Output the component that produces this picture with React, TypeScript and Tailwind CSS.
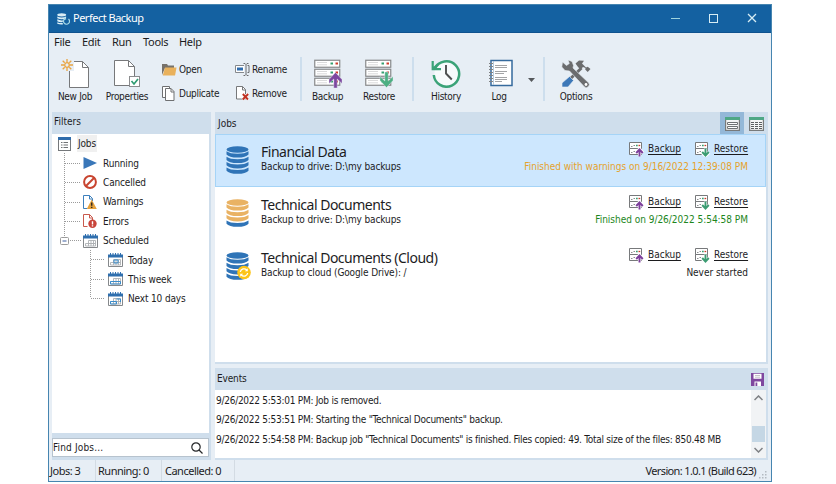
import type { ReactNode } from "react";

const SEGOE = "font-['Noto_Sans','Open_Sans',sans-serif]";
const TAHOMA = "font-['DejaVu_Sans_Condensed','DejaVu_Sans',sans-serif]";

/* ---------- icons ---------- */

function Sheet({ w = 20, h = 27 }: { w?: number; h?: number }) {
  return (
    <g fill="#fff" stroke="#77787a" strokeWidth="1">
      <path d={`M.5 .5H${w - 6.5}L${w - 0.5} 6.5V${h - 0.5}H.5Z`} />
      <path d={`M${w - 6.5} .5V6.5H${w - 0.5}`} fill="none" />
    </g>
  );
}

function NewJobIcon() {
  return (
    <svg width="28" height="29" viewBox="0 0 28 29">
      <g transform="translate(8 2)"><Sheet w={20} h={27} /></g>
      <path d="M0 0h13v12H0z" fill="#e7eef5" />
      <g stroke="#e9a440" strokeWidth="1.3" fill="none">
        <circle cx="6" cy="6" r="2.3" />
        <path d="M6 0v3M6 9v3M0 6h3M9 6h3M1.7 1.7l2 2M8.3 8.3l2 2M10.3 1.7l-2 2M3.7 8.3l-2 2" />
      </g>
    </svg>
  );
}

function PropertiesIcon() {
  return (
    <svg width="26" height="29" viewBox="0 0 26 29">
      <g transform="translate(0 1)"><Sheet w={21} h={26} /></g>
      <rect x="15.5" y="17.500" width="10" height="10" fill="#fff" stroke="#8b8c8e" />
      <path d="M17.500 22l2.500 3 4-5" stroke="#2f9c72" strokeWidth="1.700" fill="none" />
    </svg>
  );
}

function OpenIcon() {
  return (
    <svg width="15" height="13" viewBox="0 0 15 13">
      <path d="M0 12V1h5l1 1.500h6V5H3Z" fill="#77726b" />
      <path d="M3 4.500h11.500L13 12.500H.8Z" fill="#e9b15c" />
    </svg>
  );
}

function DuplicateIcon() {
  return (
    <svg width="13" height="15" viewBox="0 0 13 15" fill="#fff" stroke="#6f7072">
      <path d="M.5 .5h7v11h-7z" />
      <path d="M3.500 2.500h5.500l3 3v9H3.500Z" />
      <path d="M9 2.500v3.500h3" fill="none" />
    </svg>
  );
}

function RenameIcon() {
  return (
    <svg width="15" height="13" viewBox="0 0 15 13">
      <path d="M9 2.500H.5v7H9" fill="#fff" stroke="#85888c" />
      <path d="M2 4.500h6v3H2z" fill="#2e6cae" />
      <path d="M8.500 .5h1.500l1 1 1-1h1.500M11 1.500v10M8.500 12.500h1.500l1-1 1 1h1.500M12.500 2.500h1.500v7h-1.500" fill="none" stroke="#696b6e" />
    </svg>
  );
}

function RemoveIcon() {
  return (
    <svg width="14" height="15" viewBox="0 0 14 15">
      <path d="M1.500 .5h6l3 3v9.500h-9z" fill="#fff" stroke="#77787a" />
      <path d="M7.500 .5v3.500h3" fill="none" stroke="#77787a" />
      <path d="M7.500 7.500l6 6M13.500 7.500l-6 6" stroke="#fff" strokeWidth="3" />
      <path d="M7.800 8l5.200 5.500M13.200 8l-5.500 5.500" stroke="#c03222" strokeWidth="1.900" />
    </svg>
  );
}

function ServerIcon({ kind }: { kind: "up" | "down" }) {
  return (
    <svg width="28" height="29" viewBox="0 0 28 29">
      {[0, 9, 18].map((y) => (
        <g key={y}>
          <rect x=".75" y={y + 1.25} width="25" height="7" fill="#fff" stroke="#88898b" strokeWidth="1.200" />
          <path d={`M3.500 ${y + 3.5}h9M3.500 ${y + 5.8}h9`} stroke="#b4b5b7" strokeWidth="1" strokeDasharray="1 1" />
          <path d={`M16.500 ${y + 4.5}h2.500`} stroke="#36a070" strokeWidth="2" />
          <path d={`M21.500 ${y + 4.5}h2.500`} stroke="#cf3b2b" strokeWidth="2" />
        </g>
      ))}
      {kind === "up" ? (
        <path d="M21.500 13.500l6.500 7v4l-4.800-4.500V29h-3.400V20L15 24.500v-4Z" fill="#7d479f" stroke="#e7eef5" strokeWidth=".4" />
      ) : (
        <path d="M21.500 28.500l6.500-7v-4l-4.800 4.500V13h-3.400v9L15 17.500v4Z" fill="#4caf82" stroke="#e7eef5" strokeWidth=".4" />
      )}
    </svg>
  );
}

function HistoryIcon() {
  return (
    <svg width="30" height="29" viewBox="0 0 30 29">
      <circle cx="15.500" cy="14.500" r="12" fill="#f7fafc" />
      <path d="M4 9.500A12.700 12.700 0 1 1 2.800 16" fill="none" stroke="#3ba378" strokeWidth="2.500" />
      <path d="M1.700 2v8.200H10M1.700 10.200L7 5" fill="none" stroke="#3ba378" strokeWidth="2.200" />
      <path d="M15 6v8.500l5.800 6" fill="none" stroke="#4d4f50" strokeWidth="1.900" />
    </svg>
  );
}

function LogIcon() {
  return (
    <svg width="26" height="28" viewBox="0 0 26 28" className="ml-[3px]">
      <rect x="3" y="1.500" width="21" height="25" fill="#fff" stroke="#356a9d" strokeWidth="1.500" />
      <path d="M5.500 2v24" stroke="#a5bfd6" strokeWidth=".8" />
      <path d="M7 6.500h12M7 8.500h12M7 12.500h12M7 14.500h9M7 18.500h12M7 20.500h12M7 22.500h7" stroke="#a3a4a6" strokeWidth="1" />
      <path d="M1 4.500h4M1 7.500h4M1 10.500h4M1 13.500h4M1 16.500h4M1 19.500h4M1 22.500h4" stroke="#808284" strokeWidth="1.200" />
    </svg>
  );
}

function OptionsIcon() {
  return (
    <svg width="30" height="29" viewBox="0 0 30 29">
      <path d="M20.500 9L8 21" stroke="#6b6c6e" strokeWidth="3" />
      <path d="M14.500 4.500l3.500-3 5 .2-2 2.800 4 4 1.700-.8L29.500 10l-2.800 3-2.500-2.500.3-1.500-2.500-1-2.500 2.500-2.500-2.500Z" fill="#6b6c6e" />
      <path d="M8.500 17.500l4 4-5.500 6.500H1v-4Z" fill="#3d78b8" stroke="#e7eef5" strokeWidth=".6" />
      <path d="M1.500 3l4 3.500 2.800-2L7 1l4 1.500 1.500 4-.5 2.500L27.300 23.500a2.800 2.800 0 0 1-4 4.200L8.500 12 4 11.500.8 8Z" fill="#6b6c6e" stroke="#e7eef5" strokeWidth=".6" />
      <circle cx="25" cy="25.500" r="1.400" fill="#fff" />
    </svg>
  );
}

function Cylinder({ body, base = body, sync }: { body: string; base?: string; sync?: boolean }) {
  const fills = [body, body, body, base];
  return (
    <svg width="27" height="28" viewBox="0 0 27 28" className="block shrink-0">
      <ellipse cx="11.500" cy="3.500" rx="11" ry="3.200" fill={body} />
      {fills.map((f, i) => {
        const y = 5.3 + i * 5.4;
        return <path key={i} d={`M.5 ${y}Q4 ${y + 2.5} 11.500 ${y + 2.500}T22.500 ${y}V${y + 3.200}Q20 ${y + 6.300} 11.500 ${y + 6.300}T.5 ${y + 3.200}Z`} fill={f} />;
      })}
      {sync && (
        <g>
          <circle cx="18" cy="20.500" r="6.800" fill="#fcc419" />
          <path d="M14.300 20a3.800 3.800 0 0 1 6.500-2M21.700 21a3.800 3.800 0 0 1-6.500 2" fill="none" stroke="#fff" strokeWidth="1.300" />
          <path d="M21.800 16.300v3h-3ZM14.200 24.700v-3h3Z" fill="#fff" />
        </g>
      )}
    </svg>
  );
}

function MiniServer({ kind }: { kind: "up" | "down" }) {
  return (
    <svg width="15" height="15" viewBox="0 0 15 15" className="block shrink-0">
      <path d="M.5 .5h12v6H.5zM.5 6.500h12v6H.5z" fill="#fff" stroke="#77797b" />
      <path d="M2 4.500h1.500M4.500 3.500H6M2 10.500h1.500M4.500 9.500H6" stroke="#8d8f91" />
      <path d="M7 3.500h1.700" stroke="#36a070" strokeWidth="1.300" />
      <path d="M9.500 3.500h1.700" stroke="#cf3b2b" strokeWidth="1.300" />
      {kind === "up" ? (
        <g fill="none">
          <path d="M10.500 14.500V7M7 10.800l3.500-3.800 3.500 3.800" stroke="#fff" strokeWidth="3.200" />
          <path d="M10.500 14.500V8M7.200 11l3.300-3.500L13.800 11" stroke="#7d3f9c" strokeWidth="1.900" />
        </g>
      ) : (
        <g fill="none">
          <path d="M10.500 6.500V14M7 10.500l3.500 3.500 3.500-3.500" stroke="#fff" strokeWidth="3.200" />
          <path d="M10.500 6.500V13M7.200 10l3.300 3.500L13.800 10" stroke="#3b9c72" strokeWidth="1.900" />
        </g>
      )}
    </svg>
  );
}

function ListIcon() {
  return (
    <svg width="13" height="14" viewBox="0 0 13 14">
      <rect x=".5" y=".5" width="12" height="13" fill="#fff" stroke="#75787b" />
      <path d="M0 0h13v3H0z" fill="#2f6cab" />
      <path d="M3 5.500h1.500M3 8h1.500M3 10.500h1.500M5.500 5.500H10M5.500 8H10M5.500 10.500H10" stroke="#707375" />
    </svg>
  );
}

function PlayIcon() {
  return <svg width="14" height="12" viewBox="0 0 14 12"><path d="M.5 0L14 6 .5 12Z" fill="#3a77b9" /></svg>;
}

function CancelIcon() {
  return (
    <svg width="14" height="14" viewBox="0 0 14 14" fill="none" stroke="#c8442f" strokeWidth="2">
      <circle cx="7" cy="7" r="5.900" />
      <path d="M3 11l8-8" />
    </svg>
  );
}

function WarningIcon() {
  return (
    <svg width="14" height="14" viewBox="0 0 14 14">
      <path d="M4 13.500H.5V.5h6l3 3V6M6.500 .5v3.500h3" fill="none" stroke="#3d80bd" />
      <path d="M8.700 4.500L13.800 14H3.800Z" fill="#e6a13c" />
      <path d="M8.700 7.500v3.300M8.700 11.700v1.300" stroke="#332a20" strokeWidth="1.500" />
    </svg>
  );
}

function ErrorIcon() {
  return (
    <svg width="14" height="14" viewBox="0 0 14 14">
      <path d="M4.500 12.500h-4V.5h6l3 3V6M6.500 .5v3.500h3" fill="none" stroke="#c9594c" />
      <circle cx="9.500" cy="9.800" r="4.200" fill="#c9443a" />
      <path d="M9.500 7.200v3.200M9.500 11.200v1.300" stroke="#fff" strokeWidth="1.400" />
    </svg>
  );
}

function CalendarIcon({ mark = 0 }: { mark?: number }) {
  return (
    <svg width="15" height="14" viewBox="0 0 15 14">
      <path d="M.5 3v10.500h14V3" fill="#fff" stroke="#85888b" />
      <path d="M0 1.500h15v3H0z" fill="#2f6fae" />
      <path d="M2.500 0v3M5 0v3M7.500 0v3M10 0v3M12.500 0v3" stroke="#2f6fae" strokeWidth="1" />
      <path d="M5.500 6.500h7v3h-7zM2.500 9.500h10v2.500h-10zM5.500 9v3M8 6.500V12M10.500 6.500V12" fill="none" stroke="#adb0b3" strokeWidth=".9" />
      {mark === 1 && <path d="M6 7h4v3H6z" fill="none" stroke="#3b8dcc" />}
      {mark === 2 && <path d="M2.500 9.500h10v2.500h-10z" fill="none" stroke="#3b8dcc" />}
      {mark === 3 && <path d="M2.500 9.500h6v2.500h-6zM8.500 7h4v3" fill="none" stroke="#3b8dcc" />}
    </svg>
  );
}

function ViewIcon({ table }: { table?: boolean }) {
  return (
    <svg width="15" height="14" viewBox="0 0 15 14">
      <rect x=".6" y=".6" width="13.800" height="12.800" fill="#f5f6f6" stroke="#777a7b" strokeWidth="1.200" />
      <path d="M0 0h15v3H0z" fill="#4ea785" />
      {table ? (
        <path d="M2 5.500h3M6 5.500h3M10 5.500h3M2 7.500h3M6 7.500h3M10 7.500h3M2 9.500h3M6 9.500h3M10 9.500h3M2 11.500h3M6 11.500h3M10 11.500h3" stroke="#5c5f60" strokeWidth="1" />
      ) : (
        <path d="M2.500 5.500h10v2h-10zM2.500 9.500h10v2h-10z" fill="#fff" stroke="#707374" />
      )}
    </svg>
  );
}

function AppLogo() {
  return (
    <svg width="13" height="12" viewBox="0 0 13 12">
      <ellipse cx="4.700" cy="1.800" rx="4.500" ry="1.600" fill="#d9edf5" />
      <path d="M.3 3.500q4.400 2 8.800 0v1.700q-4.400 2-8.800 0ZM.3 6.300q3 1.500 5.500 1V9q-3 .5-5.500-.8ZM.3 9.200q3 1.200 5.500.7v1.500q-3 .4-5.500-.7Z" fill="#d9edf5" />
      <path d="M11.500 6a3 3 0 1 1-3.700-.2M7.500 4l1 2-2 .8" fill="none" stroke="#a9dbe8" strokeWidth="1.200" />
    </svg>
  );
}

/* ---------- building blocks ---------- */

function BigTool({ icon, label, width }: { icon: ReactNode; label: string; width: string }) {
  return (
    <div className={`flex shrink-0 flex-col items-center ${width}`}>
      <div className="flex h-8 items-center">{icon}</div>
      <span className="mt-[1px] text-[10px] leading-[14px] tracking-[-0.3px] whitespace-nowrap">{label}</span>
    </div>
  );
}

function SmallTool({ icon, label }: { icon: ReactNode; label: string }) {
  return (
    <div className="flex h-6 items-center">
      <span className="flex w-[17px] shrink-0">{icon}</span>
      <span className="pt-[2px] text-[10px] leading-[14px] tracking-[-0.3px]">{label}</span>
    </div>
  );
}

function Divider({ className = "" }: { className?: string }) {
  return <div className={`h-11 w-[2px] shrink-0 bg-[#cddeed] ${className}`} />;
}

const tree: { label: string; icon: ReactNode; depth: number }[] = [
  { label: "Jobs", icon: <ListIcon />, depth: 0 },
  { label: "Running", icon: <PlayIcon />, depth: 1 },
  { label: "Cancelled", icon: <CancelIcon />, depth: 1 },
  { label: "Warnings", icon: <WarningIcon />, depth: 1 },
  { label: "Errors", icon: <ErrorIcon />, depth: 1 },
  { label: "Scheduled", icon: <CalendarIcon />, depth: 1 },
  { label: "Today", icon: <CalendarIcon mark={1} />, depth: 2 },
  { label: "This week", icon: <CalendarIcon mark={2} />, depth: 2 },
  { label: "Next 10 days", icon: <CalendarIcon mark={3} />, depth: 2 },
];

const indent = ["pl-[6px]", "pl-[31px]", "pl-[56px]"];

function Tree() {
  return (
    <div className="relative min-h-0 flex-1 bg-white">
      <svg width="60" height="180" className="absolute top-0 left-0" fill="none" stroke="#9b9b9b" strokeDasharray="1 1">
        <path d="M12.500 19V107M13 29.500h16M13 48.500h16M13 68.500h16M13 87.500h16M18 106.500h11M38.500 116v48M39 125.500h14M39 145.500h14M39 164.500h14" />
        <rect x="8.500" y="103.500" width="8" height="7" rx="1" fill="#fff" strokeDasharray="none" />
        <path d="M10.500 107h4" stroke="#3d5fa0" strokeDasharray="none" />
      </svg>
      {tree.map((n) => (
        <div key={n.label} className={`flex h-[19.4px] items-center ${indent[n.depth]}`}>
          <span className={`flex shrink-0 ${n.depth ? "w-[20px]" : "w-[19px]"}`}>{n.icon}</span>
          <span className={`text-[10px] leading-[17px] tracking-[-0.15px] whitespace-nowrap ${n.depth === 0 ? "bg-[#f0f0f0] px-[1px]" : ""}`}>{n.label}</span>
        </div>
      ))}
    </div>
  );
}

function JobRow({ icon, title, sub, status, color, selected }: {
  icon: ReactNode; title: string; sub: string; status: string; color: string; selected?: boolean;
}) {
  return (
    <div className={`flex h-[53px] border pl-[10px] pr-[17px] ${selected ? "border-[#a5d4f7] bg-[#cde7fe]" : "border-transparent"}`}>
      <div className="w-[35px] shrink-0 pt-[11px]">{icon}</div>
      <div className="min-w-0 flex-1 pt-[8px]">
        <div className={`text-[14px] leading-[17px] tracking-[-0.5px] whitespace-nowrap ${SEGOE}`}>{title}</div>
        <div className="text-[10px] leading-[13px] tracking-[-0.12px] whitespace-nowrap">{sub}</div>
      </div>
      <div className="flex flex-col items-end pt-[6px] text-[10px]">
        <div className="flex h-[16px] items-center">
          <MiniServer kind="up" />
          <span className="ml-[4px] w-[33px] leading-[14px] underline underline-offset-2">Backup</span>
          <span className="ml-[14px] flex"><MiniServer kind="down" /></span>
          <span className="ml-[4px] w-[34px] leading-[14px] underline underline-offset-2">Restore</span>
        </div>
        <div className={`mt-[3px] leading-[14px] tracking-[-0.02px] whitespace-nowrap ${color}`}>{status}</div>
      </div>
    </div>
  );
}

function ScrollArrow({ d }: { d: string }) {
  return <svg width="9" height="6" viewBox="0 0 9 6"><path d={d} fill="none" stroke="#7e8184" strokeWidth="1.500" /></svg>;
}

export default function App() {
  return (
    <div className={`h-[484px] w-[836px] overflow-hidden bg-white pt-1 pl-12 text-[#1c1c1e] ${TAHOMA}`}>
      <div className="flex h-[478px] w-[724px] flex-col border border-[#4685b0] bg-[#e7eef5]">
        {/* title bar */}
        <div className="flex h-[28px] shrink-0 items-center border-b border-[#0f528e] bg-[#1461a1] pl-[8px] text-white">
          <AppLogo />
          <span className={`ml-[3px] flex-1 text-[11px] tracking-[-0.5px] ${SEGOE}`}>Perfect Backup</span>
          <svg width="86" height="11" viewBox="0 0 86 11" className="mr-[14px]" fill="none" stroke="#d7edf4">
            <path d="M0 5.500h9" stroke="#9fd4de" />
            <rect x="38.500" y="1.500" width="8" height="8" />
            <path d="M77 1l8 8M85 1l-8 8" strokeWidth="1.300" />
          </svg>
        </div>

        {/* menu */}
        <div className={`flex h-[18px] shrink-0 items-center pl-[5px] text-[11px] leading-[16px] tracking-[-0.3px] ${SEGOE}`}>
          <span className="w-[28px]">File</span>
          <span className="w-[30px]">Edit</span>
          <span className="w-[31px]">Run</span>
          <span className="w-[36px]">Tools</span>
          <span>Help</span>
        </div>

        {/* toolbar */}
        <div className="flex h-[61px] shrink-0 pt-[6px]">
          <BigTool width="w-[52px]" label="New Job" icon={<NewJobIcon />} />
          <BigTool width="w-[52px]" label="Properties" icon={<PropertiesIcon />} />
          <div className="ml-[9px] w-[73px]">
            <SmallTool icon={<OpenIcon />} label="Open" />
            <SmallTool icon={<DuplicateIcon />} label="Duplicate" />
          </div>
          <div className="w-[65px]">
            <SmallTool icon={<RenameIcon />} label="Rename" />
            <SmallTool icon={<RemoveIcon />} label="Remove" />
          </div>
          <Divider />
          <BigTool width="w-[51px]" label="Backup" icon={<ServerIcon kind="up" />} />
          <BigTool width="w-[52px]" label="Restore" icon={<ServerIcon kind="down" />} />
          <Divider className="ml-[7px]" />
          <BigTool width="w-[64px]" label="History" icon={<HistoryIcon />} />
          <BigTool width="w-[42px]" label="Log" icon={<LogIcon />} />
          <div className="flex w-[23px] justify-center pt-[21px]">
            <svg width="7" height="4" viewBox="0 0 7 4"><path d="M0 0h7L3.500 4Z" fill="#55585b" /></svg>
          </div>
          <Divider />
          <BigTool width="w-[62px]" label="Options" icon={<OptionsIcon />} />
        </div>

        {/* main area */}
        <div className="flex min-h-0 flex-1 pr-[3px] pl-[3px]">
          <div className="flex w-[159px] shrink-0 flex-col bg-[#cfdeec] pr-[2px]">
            <div className="h-[22px] shrink-0 pl-[2px] text-[10px] leading-[20px]">Filters</div>
            <Tree />
            <div className="mt-[5px] mb-[3px] flex h-[19px] shrink-0 items-center justify-between border border-[#b7c3ce] bg-white pr-[5px] text-[10px] leading-[14px] tracking-[0.15px]">
              <span>Find Jobs...</span>
              <svg width="12" height="12" viewBox="0 0 12 12" fill="none" stroke="#26282a" strokeWidth="1.200">
                <circle cx="5" cy="5" r="4.200" />
                <path d="M8 8l3.500 3.500" />
              </svg>
            </div>
          </div>

          <div className="ml-[4px] flex min-w-0 flex-1 flex-col">
            <div className="flex h-[252px] shrink-0 flex-col bg-[#cfdeec]">
              <div className="flex h-[22px] shrink-0 items-stretch pl-[3px] text-[10px] leading-[23px]">
                <span className="flex-1">Jobs</span>
                <span className="flex w-[24px] items-center justify-center bg-[#94b8d8] pt-[2px]"><ViewIcon /></span>
                <span className="flex w-[24px] items-center justify-center pt-[2px]"><ViewIcon table /></span>
              </div>
              <div className="mr-[2px] mb-[2px] flex-1 bg-white">
                <JobRow selected icon={<Cylinder body="#2f74b7" />} title="Financial Data" sub="Backup to drive: D:\my backups"
                  status="Finished with warnings on 9/16/2022 12:39:08 PM" color="text-[#e5a22c]" />
                <JobRow icon={<Cylinder body="#e9b263" base="#2f74b7" />} title="Technical Documents" sub="Backup to drive: D:\my backups"
                  status="Finished on 9/26/2022 5:54:58 PM" color="text-[#1d861d]" />
                <JobRow icon={<Cylinder body="#2f74b7" sync />} title="Technical Documents (Cloud)" sub="Backup to cloud (Google Drive): /"
                  status="Never started" color="text-[#1c1c1e]" />
              </div>
            </div>

            <div className="mt-[4px] flex min-h-0 flex-1 flex-col bg-[#cfdeec]">
              <div className="flex h-[22px] shrink-0 items-center justify-between pr-[4px] pl-[2px] text-[10px] leading-[14px] tracking-[-0.15px]">
                <span>Events</span>
                <svg width="13" height="13" viewBox="0 0 13 13">
                  <path d="M0 0h13v13H0z" fill="#7f489f" />
                  <path d="M2.500 .8h8v5h-8zM3.500 8.500h6.500V13H3.500z" fill="#fff" />
                  <path d="M4 2.500h5M4 4.200h5" stroke="#b9b3be" strokeWidth=".8" />
                  <path d="M4.500 9.500h1.800V13H4.500z" fill="#7f489f" />
                </svg>
              </div>
              <div className="mr-[2px] mb-[2px] flex flex-1 bg-white">
                <div className="min-w-0 flex-1 pt-[1px] pl-[1px] text-[10px] leading-[19.4px] tracking-[-0.266px] whitespace-nowrap">
                  <div>9/26/2022 5:53:01 PM: Job is removed.</div>
                  <div>9/26/2022 5:53:51 PM: Starting the "Technical Documents" backup.</div>
                  <div>9/26/2022 5:54:58 PM: Backup job "Technical Documents" is finished. Files copied: 49. Total size of the files: 850.48 MB</div>
                </div>
                <div className="flex w-[15px] shrink-0 flex-col items-center bg-[#f1f3f5] py-[5px]">
                  <ScrollArrow d="M.5 5L4.500 1l4 4" />
                  <div className="mt-[25px] h-[16px] w-[13px] bg-[#c5d7e5]" />
                  <div className="mt-auto flex"><ScrollArrow d="M.5 1L4.500 5l4-4" /></div>
                </div>
              </div>
            </div>
          </div>
        </div>

        {/* status bar */}
        <div className={`flex h-[21px] shrink-0 items-stretch text-[11px] leading-[21px] tracking-[-0.5px] whitespace-nowrap ${SEGOE}`}>
          <span className="w-[47px] border-r border-[#d3dbe3] pl-[1px]">Jobs: 3</span>
          <span className="w-[66px] border-r border-[#d3dbe3] pl-[2px]">Running: 0</span>
          <span className="w-[73px] border-r border-[#d3dbe3] pl-[3px]">Cancelled: 0</span>
          <span className="flex-1 pr-[3px] text-right tracking-[-0.63px]">Version: 1.0.1 (Build 623)</span>
          <svg width="8" height="8" viewBox="0 0 8 8" className="mr-[4px] mb-[2px] self-end" fill="#b3bac1">
            <path d="M6 0h1.500v1.500H6zM3 3h1.500v1.500H3zM6 3h1.500v1.500H6zM0 6h1.500v1.500H0zM3 6h1.500v1.500H3zM6 6h1.500v1.500H6z" />
          </svg>
        </div>
      </div>
    </div>
  );
}
